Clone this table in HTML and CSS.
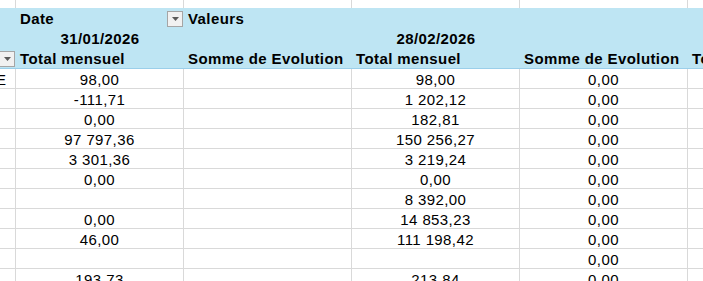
FILE: index.html
```html
<!DOCTYPE html>
<html lang="fr">
<head>
<meta charset="utf-8">
<title>Tableau croisé</title>
<link rel="stylesheet" href="styles.css">
</head>
<body>
<div class="sheet">
  <div class="row top">
    <div class="cell"></div><div class="cell"></div><div class="cell"></div><div class="cell"></div><div class="cell"></div><div class="cell"></div>
  </div>
  <div class="pivot-head">
    <div class="row head">
      <div class="cell"></div>
      <div class="cell left bold has-btn">Date<span class="dd"><svg width="7" height="4" viewBox="0 0 7 4"><polygon points="0,0 7,0 3.5,4" fill="#5a5a5a"/></svg></span></div>
      <div class="cell left bold">Valeurs</div>
      <div class="cell"></div><div class="cell"></div><div class="cell"></div>
    </div>
    <div class="row head">
      <div class="cell"></div>
      <div class="cell center bold">31/01/2026</div>
      <div class="cell"></div>
      <div class="cell center bold">28/02/2026</div>
      <div class="cell"></div><div class="cell"></div>
    </div>
    <div class="row head">
      <div class="cell has-btn"><span class="dd dd-a"><svg width="7" height="4" viewBox="0 0 7 4"><polygon points="0,0 7,0 3.5,4" fill="#5a5a5a"/></svg></span></div>
      <div class="cell left bold">Total mensuel</div>
      <div class="cell left bold">Somme de Evolution</div>
      <div class="cell left bold">Total mensuel</div>
      <div class="cell left bold">Somme de Evolution</div>
      <div class="cell left bold">Total mensuel</div>
    </div>
  </div>
  <div class="row data"><div class="cell clip"><span class="cut">E</span></div><div class="cell center">98,00</div><div class="cell"></div><div class="cell center">98,00</div><div class="cell center">0,00</div><div class="cell"></div></div>
  <div class="row data"><div class="cell clip"></div><div class="cell center">-111,71</div><div class="cell"></div><div class="cell center">1 202,12</div><div class="cell center">0,00</div><div class="cell"></div></div>
  <div class="row data"><div class="cell clip"></div><div class="cell center">0,00</div><div class="cell"></div><div class="cell center">182,81</div><div class="cell center">0,00</div><div class="cell"></div></div>
  <div class="row data"><div class="cell clip"></div><div class="cell center">97 797,36</div><div class="cell"></div><div class="cell center">150 256,27</div><div class="cell center">0,00</div><div class="cell"></div></div>
  <div class="row data"><div class="cell clip"></div><div class="cell center">3 301,36</div><div class="cell"></div><div class="cell center">3 219,24</div><div class="cell center">0,00</div><div class="cell"></div></div>
  <div class="row data"><div class="cell clip"></div><div class="cell center">0,00</div><div class="cell"></div><div class="cell center">0,00</div><div class="cell center">0,00</div><div class="cell"></div></div>
  <div class="row data"><div class="cell clip"></div><div class="cell center"></div><div class="cell"></div><div class="cell center">8 392,00</div><div class="cell center">0,00</div><div class="cell"></div></div>
  <div class="row data"><div class="cell clip"></div><div class="cell center">0,00</div><div class="cell"></div><div class="cell center">14 853,23</div><div class="cell center">0,00</div><div class="cell"></div></div>
  <div class="row data"><div class="cell clip"></div><div class="cell center">46,00</div><div class="cell"></div><div class="cell center">111 198,42</div><div class="cell center">0,00</div><div class="cell"></div></div>
  <div class="row data"><div class="cell clip"></div><div class="cell center"></div><div class="cell"></div><div class="cell center"></div><div class="cell center">0,00</div><div class="cell"></div></div>
  <div class="row data"><div class="cell clip"></div><div class="cell center">193,73</div><div class="cell"></div><div class="cell center">213,84</div><div class="cell center">0,00</div><div class="cell"></div></div>
</div>
</body>
</html>
```

FILE: styles.css
```css
html, body {
  margin: 0;
  padding: 0;
  background: #ffffff;
  overflow: hidden;
}

.sheet {
  width: 703px;
  height: 281px;
  overflow: hidden;
  font-family: "Liberation Sans", Arial, sans-serif;
  font-size: 15px;
  letter-spacing: 0.4px;
  color: #000000;
}

.row {
  display: grid;
  grid-template-columns: 16px 168px 168px 168px 168px 200px;
}

.cell {
  box-sizing: border-box;
  height: 20px;
  padding: 1px 4px 0 4px;
  line-height: 20px;
  white-space: nowrap;
}

.top .cell {
  height: 8px;
  padding: 0;
  border-right: 1px solid #d9d9d9;
}

.pivot-head {
  background: #bee5f3;
  border-bottom: 1px solid #9bcfea;
}

.head .cell {
  position: relative;
}

.data .cell {
  border-right: 1px solid #d9d9d9;
  border-bottom: 1px solid #d9d9d9;
}

.left { text-align: left; }
.center { text-align: center; }
.bold { font-weight: bold; }

.clip {
  overflow: hidden;
  padding: 1px 0 0 0;
}

.cut {
  display: inline-block;
  margin-left: -4px;
}

.dd {
  position: absolute;
  top: 3px;
  right: 1px;
  width: 16px;
  height: 16px;
  box-sizing: border-box;
  border: 1px solid #a5a5a5;
  background: #f1f1f1;
  display: flex;
  align-items: center;
  justify-content: center;
}

.dd svg {
  display: block;
}

.dd-a {
  right: auto;
  left: -1px;
}
```
